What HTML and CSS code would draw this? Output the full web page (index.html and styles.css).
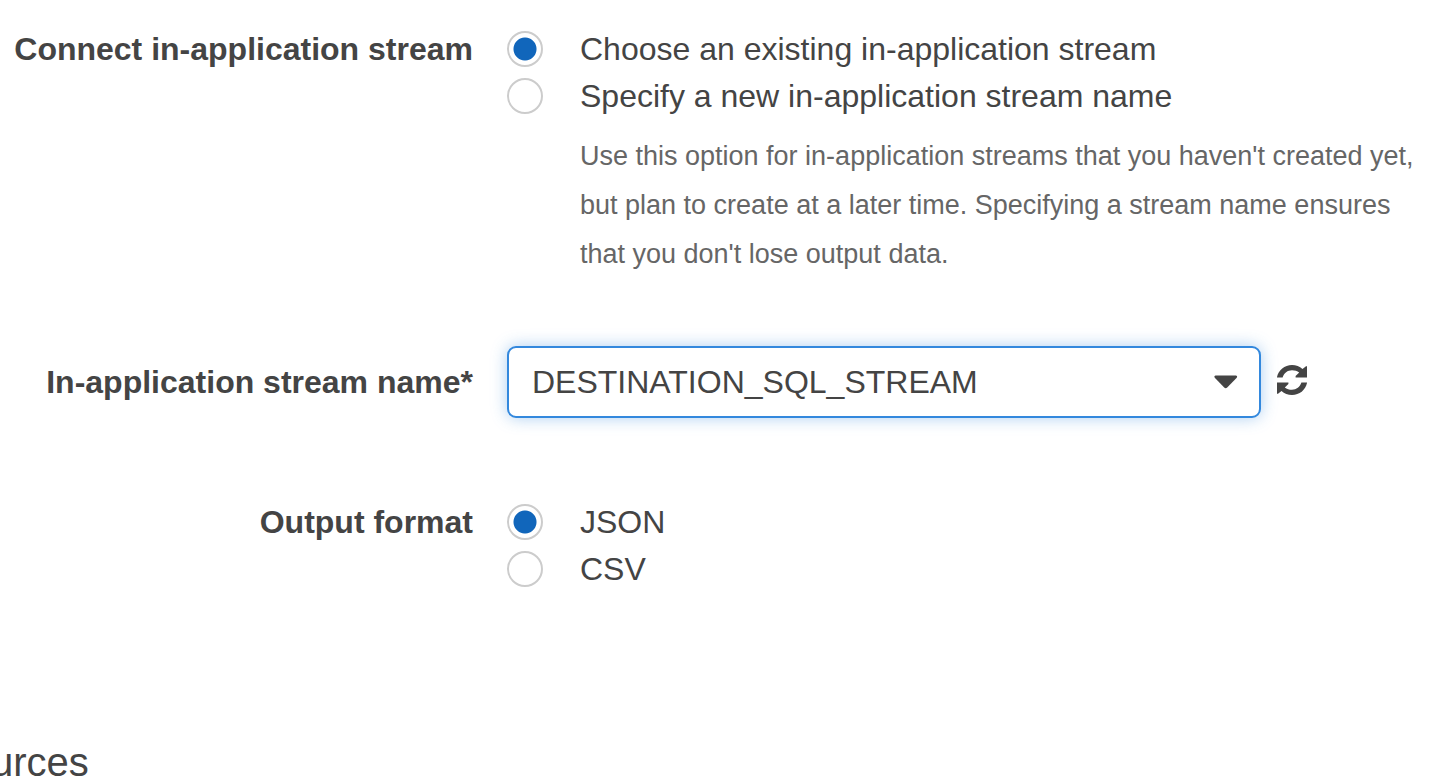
FILE: index.html
```html
<!DOCTYPE html>
<html lang="en">
<head>
<meta charset="utf-8">
<title>Connect in-application stream</title>
<link rel="stylesheet" href="styles.css">
</head>
<body>
<form class="form">
  <div class="row" role="radiogroup" aria-labelledby="connect-label">
    <span class="row-label" id="connect-label">Connect in-application stream</span>
    <div class="field">
      <label class="option"><input class="radio" type="radio" name="stream" checked><span class="option-text">Choose an existing in-application stream</span></label>
      <label class="option"><input class="radio" type="radio" name="stream" aria-describedby="new-help"><span class="option-text">Specify a new in-application stream name</span></label>
      <p class="help" id="new-help">Use this option for in-application streams that you haven't created yet, but plan to create at a later time. Specifying a stream name ensures that you don't lose output data.</p>
    </div>
  </div>
  <div class="row row-select">
    <label class="select-label" for="stream-name">In-application stream name*</label>
    <div class="select-line">
      <div class="select-box">
        <select class="select" id="stream-name"><option>DESTINATION_SQL_STREAM</option></select>
        <svg class="caret" viewBox="0 0 24 14" aria-hidden="true"><path d="M1.500 .5h20.500q2 .5.5 2.500l-9.300 9.500q-1.500 1.500-3 0L1 3Q-.5 1 1.500.5z"/></svg>
      </div>
      <button class="refresh" type="button" aria-label="Refresh">
        <svg class="refresh-icon" viewBox="0 0 30 30" aria-hidden="true">
          <path d="M0 12C1.500 5 7.500 0 15 0c4 0 7.700 1.500 10.500 4L29 1.200h1v11.200H18.600V11l3.600-3.400C20.200 6 17.800 5.200 15 5.200c-4.400 0-8 2.800-9.400 7.200H0z"/>
          <path transform="rotate(180 15 15)" d="M0 12C1.500 5 7.500 0 15 0c4 0 7.700 1.500 10.500 4L29 1.200h1v11.200H18.600V11l3.600-3.400C20.200 6 17.800 5.200 15 5.200c-4.400 0-8 2.800-9.400 7.200H0z"/>
        </svg>
      </button>
    </div>
  </div>
  <div class="row" role="radiogroup" aria-labelledby="format-label">
    <span class="row-label" id="format-label">Output format</span>
    <div class="field">
      <label class="option"><input class="radio" type="radio" name="format" checked><span class="option-text">JSON</span></label>
      <label class="option"><input class="radio" type="radio" name="format"><span class="option-text">CSV</span></label>
    </div>
  </div>
</form>
<h2 class="section-title">urces</h2>
</body>
</html>
```
FILE: styles.css
```css
* {
  box-sizing: border-box;
}

body {
  margin: 0;
  background: #fff;
  color: #444;
  font-family: "Liberation Sans", Arial, sans-serif;
  font-size: 32px;
  line-height: 45px;
  overflow-x: hidden;
}

.form {
  padding: 25px 24px 0 0;
}

.row {
  display: grid;
  grid-template-columns: 473px minmax(0, 1fr);
  column-gap: 34px;
}

.row-label,
.select-label {
  font-weight: bold;
  text-align: right;
}

.row-label,
.option-text {
  padding-top: 2px;
}

.row-select {
  align-items: center;
  margin: 67px 0 80px;
}

.option {
  display: flex;
  align-items: center;
  gap: 37px;
}

.radio {
  appearance: none;
  flex: none;
  width: 36px;
  height: 36px;
  margin: 0;
  border: 2px solid #ccc;
  border-radius: 50%;
  background: #fff;
}

.radio:checked {
  background: radial-gradient(circle, #1166bb 11px, #fff 12px);
}

.help {
  margin: 13px 0 0 73px;
  color: #666;
  font-size: 27px;
  line-height: 49px;
}

.select-line {
  display: flex;
  align-items: center;
  gap: 16px;
}

.select-box {
  position: relative;
  flex: 0 1 754px;
}

.select {
  appearance: none;
  display: block;
  width: 100%;
  height: 72px;
  padding: 0 64px 0 23px;
  border: 2px solid #3388dd;
  border-radius: 9px;
  outline: none;
  background: #fff;
  box-shadow: 0 0 16px rgba(51, 136, 221, 0.4);
  color: inherit;
  font: inherit;
}

.caret {
  position: absolute;
  top: 29px;
  right: 23px;
  width: 24px;
  height: 14px;
  fill: #444;
  pointer-events: none;
}

.refresh {
  display: flex;
  padding: 0 0 4px;
  border: 0;
  background: none;
}

.refresh-icon {
  width: 30px;
  height: 30px;
  fill: #444;
}

.section-title {
  margin: 150px 0 0 -9px;
  font-size: 40px;
  font-weight: normal;
  line-height: 40px;
}
```
